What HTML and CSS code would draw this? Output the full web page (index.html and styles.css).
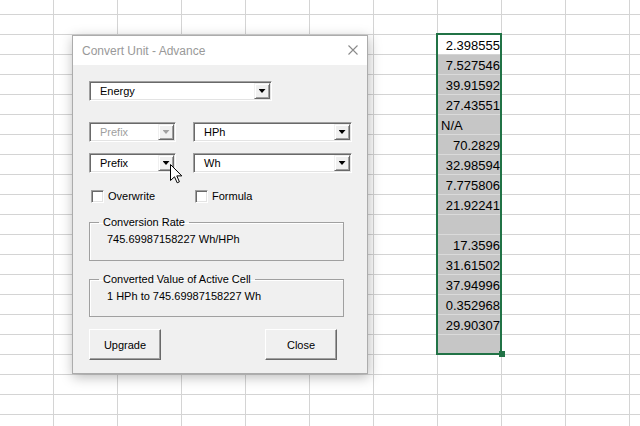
FILE: index.html
```html
<!DOCTYPE html>
<html lang="en">
<head>
    <meta charset="UTF-8">
    <meta name="viewport" content="width=device-width, initial-scale=1.0">
    <title>Convert Unit - Advance</title>
    <link rel="stylesheet" href="styles.css">
</head>
<body>
    <div class="sheet">
        <div class="selection">
            <div class="cell active">2.398555</div>
            <div class="cell">7.527546</div>
            <div class="cell">39.91592</div>
            <div class="cell">27.43551</div>
            <div class="cell text">N/A</div>
            <div class="cell">70.2829</div>
            <div class="cell">32.98594</div>
            <div class="cell">7.775806</div>
            <div class="cell">21.92241</div>
            <div class="cell"></div>
            <div class="cell">17.3596</div>
            <div class="cell">31.61502</div>
            <div class="cell">37.94996</div>
            <div class="cell">0.352968</div>
            <div class="cell">29.90307</div>
            <div class="cell"></div>
            <span class="fill-handle"></span>
        </div>
    </div>

    <div class="dialog">
        <div class="titlebar">
            <span class="title">Convert Unit - Advance</span>
            <svg class="close-x" width="10" height="10" viewBox="0 0 10 10">
                <path d="M0.5 0.5 L9.5 9.5 M9.5 0.5 L0.5 9.5" stroke="#8a8a8a" stroke-width="1.1" fill="none"/>
            </svg>
        </div>

        <div class="dialog-body">
            <div class="combo combo-type">
                <span class="combo-value">Energy</span>
                <span class="drop"></span>
            </div>

            <div class="combo-row">
                <div class="combo combo-prefix disabled">
                    <span class="combo-value">Prefix</span>
                    <span class="drop"></span>
                </div>
                <div class="combo combo-unit">
                    <span class="combo-value">HPh</span>
                    <span class="drop"></span>
                </div>
            </div>

            <div class="combo-row second">
                <div class="combo combo-prefix">
                    <span class="combo-value">Prefix</span>
                    <span class="drop"></span>
                </div>
                <div class="combo combo-unit">
                    <span class="combo-value">Wh</span>
                    <span class="drop"></span>
                </div>
            </div>

            <div class="check-row">
                <label class="check"><span class="box"></span>Overwrite</label>
                <label class="check"><span class="box"></span>Formula</label>
            </div>

            <fieldset class="group">
                <legend>Conversion Rate</legend>
                <div class="group-value">745.69987158227 Wh/HPh</div>
            </fieldset>

            <fieldset class="group last">
                <legend>Converted Value of Active Cell</legend>
                <div class="group-value">1 HPh to 745.69987158227 Wh</div>
            </fieldset>

            <div class="button-row">
                <button class="btn">Upgrade</button>
                <button class="btn">Close</button>
            </div>
        </div>
    </div>

    <svg class="cursor" width="13" height="20" viewBox="0 0 13 20">
        <path d="M0.5 0.5 L0.5 16.5 L4.5 12.8 L7.2 18.8 L9.4 17.8 L6.8 11.9 L11.8 11.9 Z" fill="#fff" stroke="#000" stroke-width="1" stroke-linejoin="miter"/>
    </svg>
</body>
</html>
```

FILE: styles.css
```css
body {
    margin: 0;
    width: 640px;
    height: 426px;
    overflow: hidden;
    position: relative;
    font-family: "Liberation Sans", Arial, sans-serif;
    background-color: #fff;
    background-image:
        linear-gradient(to right, #d4d4d4 1px, transparent 1px),
        linear-gradient(to bottom, #d4d4d4 1px, transparent 1px);
    background-size: 64px 20px;
    background-position: 53px 14px;
}

/* spreadsheet */

.sheet {
    display: grid;
    grid-template-columns: 54px repeat(9, 64px);
    grid-template-rows: 15px repeat(20, 20px);
}

.selection {
    grid-column: 8;
    grid-row: 3 / span 16;
    position: relative;
}

.selection::after {
    content: "";
    position: absolute;
    left: -2px;
    top: -2px;
    width: 66px;
    height: 322px;
    box-sizing: border-box;
    border: 2px solid #217346;
}

.fill-handle {
    position: absolute;
    left: 61px;
    top: 316px;
    width: 6px;
    height: 6px;
    background-color: #217346;
    z-index: 1;
}

.cell {
    box-sizing: border-box;
    height: 20px;
    padding: 2px 2px 0 0;
    border-bottom: 1px solid #dadada;
    background-color: #c6c6c6;
    color: #000;
    font-size: 13px;
    line-height: 17px;
    text-align: right;
}

.cell.active {
    background-color: #fff;
    border-bottom-color: #d4d4d4;
}

.cell.text {
    text-align: left;
    padding-left: 3px;
}

/* dialog */

.dialog {
    position: absolute;
    left: 72px;
    top: 35px;
    width: 296px;
    height: 339px;
    box-sizing: border-box;
    border: 1px solid #acacac;
    background-color: #f0f0f0;
    box-shadow: 1px 3px 12px rgba(0, 0, 0, 0.28);
    display: flex;
    flex-direction: column;
}

.titlebar {
    height: 29px;
    background-color: #fff;
    display: flex;
    align-items: center;
    justify-content: space-between;
    padding: 0 9px 0 9px;
}

.title {
    color: #999;
    font-size: 12px;
}

.close-x {
    margin-top: -1px;
}

.dialog-body {
    padding: 16px 0 0 16px;
    font-size: 11px;
    color: #000;
}

.combo {
    box-sizing: border-box;
    height: 20px;
    display: flex;
    align-items: center;
    padding: 0 1px 0 10px;
    background-color: #fff;
    border: 1px solid;
    border-color: #a0a0a0 #fff #fff #a0a0a0;
    box-shadow: inset 1px 1px 0 #696969, inset -1px -1px 0 #e3e3e3;
}

.combo-type {
    width: 183px;
}

.combo-prefix {
    width: 87px;
}

.combo-unit {
    width: 159px;
}

.combo-value {
    flex: 1;
}

.drop {
    box-sizing: border-box;
    width: 16px;
    height: 16px;
    display: flex;
    align-items: center;
    justify-content: center;
    background-color: #f0f0f0;
    border: 1px solid;
    border-color: #f0f0f0 #696969 #696969 #f0f0f0;
    box-shadow: inset 1px 1px 0 #fff, inset -1px -1px 0 #a0a0a0;
}

.drop::after {
    content: "";
    width: 7px;
    height: 4px;
    background-color: #000;
    clip-path: polygon(0 0, 100% 0, 50% 100%);
}

.combo.disabled .combo-value {
    color: #a0a0a0;
}

.combo.disabled .drop::after {
    background-color: #a0a0a0;
}

.combo-row {
    display: flex;
    gap: 17px;
    margin-top: 21px;
}

.combo-row.second {
    margin-top: 11px;
}

.check-row {
    display: flex;
    margin-top: 17px;
    height: 13px;
}

.check {
    display: flex;
    align-items: center;
    gap: 4px;
    width: 102px;
    padding-left: 2px;
    line-height: 13px;
}

.box {
    box-sizing: border-box;
    width: 13px;
    height: 13px;
    background-color: #fff;
    border: 1px solid;
    border-color: #a0a0a0 #fff #fff #a0a0a0;
    box-shadow: inset 1px 1px 0 #696969, inset -1px -1px 0 #e3e3e3;
}

.group {
    box-sizing: border-box;
    width: 255px;
    height: 45px;
    margin: 13px 0 0 0;
    padding: 0 8px 0 17px;
    border: 1px solid #a0a0a0;
    box-shadow: inset 1px 1px 0 #fff;
}

.group.last {
    height: 44px;
    margin-top: 12px;
}

.group legend {
    margin-left: -8px;
    padding: 0 4px;
    line-height: 12px;
}

.group-value {
    margin-top: 5px;
    line-height: 13px;
}

.button-row {
    display: flex;
    gap: 104px;
    margin-top: 12px;
}

.btn {
    box-sizing: border-box;
    width: 72px;
    height: 31px;
    margin: 0;
    padding: 0;
    font-family: "Liberation Sans", Arial, sans-serif;
    font-size: 11px;
    color: #000;
    background-color: #f0f0f0;
    border: 1px solid;
    border-color: #fff #696969 #696969 #fff;
    box-shadow: inset -1px -1px 0 #a0a0a0;
}

.cursor {
    position: absolute;
    left: 170px;
    top: 164px;
}
```
